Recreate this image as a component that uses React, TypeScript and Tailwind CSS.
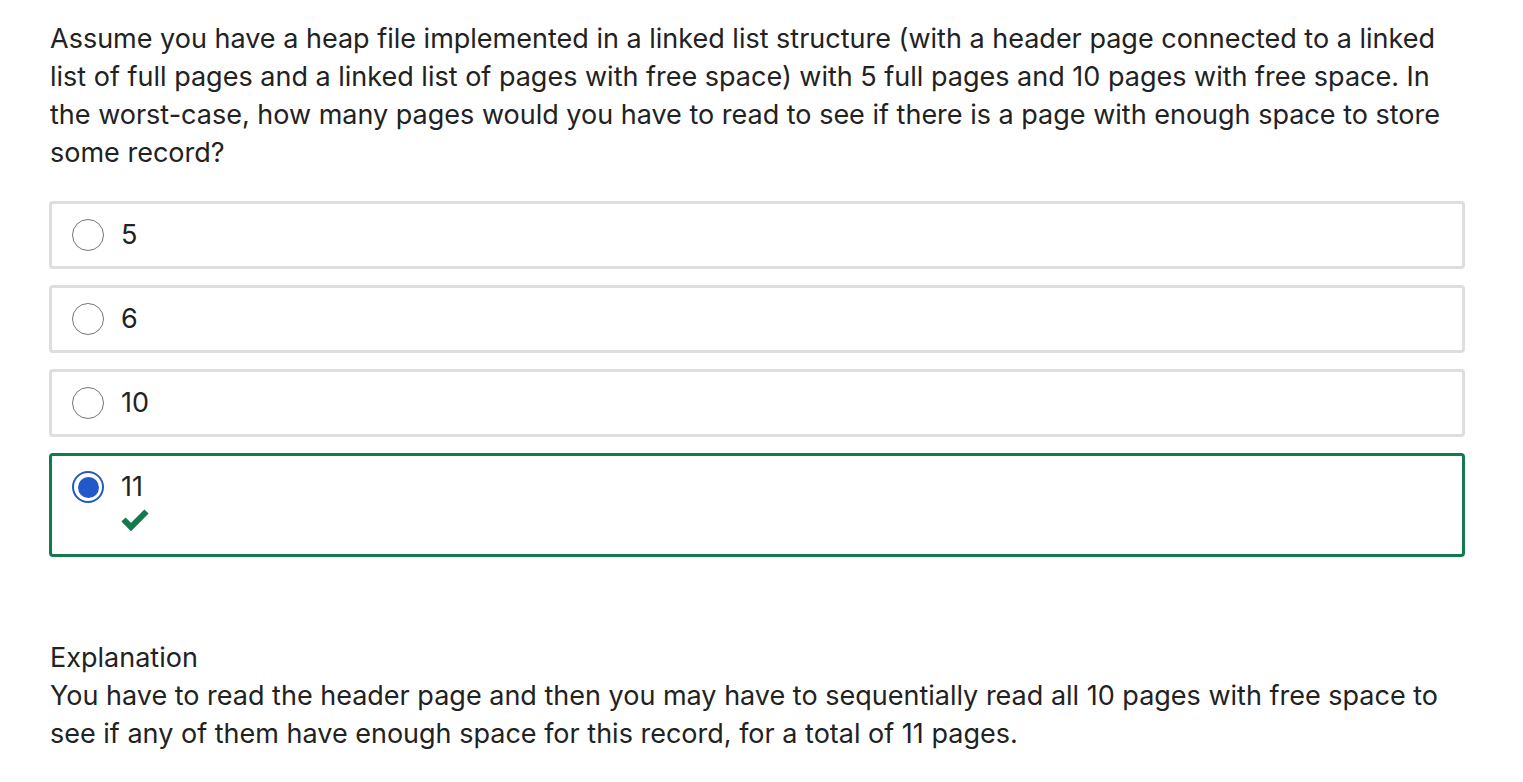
import { useState } from "react";

const options = [
  { id: "a", label: "5" },
  { id: "b", label: "6" },
  { id: "c", label: "10" },
  { id: "d", label: "11" },
];

function Radio({ checked }: { checked: boolean }) {
  if (checked) {
    return (
      <span className="flex h-8 w-8 shrink-0 items-center justify-center rounded-full border-2 border-[#2159c9] bg-white">
        <span className="h-[21px] w-[21px] rounded-full bg-[#2159c9]" />
      </span>
    );
  }
  return <span className="h-8 w-8 shrink-0 rounded-full border-[1.5px] border-[#767676] bg-white" />;
}

function CheckIcon() {
  return (
    <svg viewBox="0 0 28 24" className="h-[24px] w-[28px]" aria-hidden="true">
      <path d="M2.5 12.5 L10 20 L25.5 4.5" fill="none" stroke="#137a4d" strokeWidth="6" strokeLinecap="butt" strokeLinejoin="miter" />
    </svg>
  );
}

export default function App() {
  const [selected] = useState("d");
  const correct = "d";

  return (
    <div className="min-h-screen bg-white font-['Inter','Noto_Sans',sans-serif] text-[27px] leading-[38px] text-[#222]">
      <div className="ml-[49px] w-[1416px] pt-5">
        <p className="pl-px">
          Assume you have a heap file implemented in a linked list structure (with a header page connected to a linked
          list of full pages and a linked list of pages with free space) with 5 full pages and 10 pages with free space. In
          the worst-case, how many pages would you have to read to see if there is a page with enough space to store
          some record?
        </p>

        <div className="mt-[29px] flex flex-col gap-4">
          {options.map((option) => {
            const isSelected = option.id === selected;
            const isCorrect = isSelected && option.id === correct;
            return (
              <div
                key={option.id}
                className={
                  isCorrect
                    ? "rounded-[4px] border-[3px] border-[#137a4d] px-[20px] pt-[12px] pb-[23px]"
                    : "rounded-[4px] border-[3px] border-[#dedede] px-[20px] py-[12px]"
                }
              >
                <div className="flex items-start gap-[17px]">
                  <div className="flex h-[38px] items-center">
                    <Radio checked={isSelected} />
                  </div>
                  <div>
                    <div>{option.label}</div>
                    {isCorrect ? (
                      <div className="mt-[1px]">
                        <CheckIcon />
                      </div>
                    ) : null}
                  </div>
                </div>
              </div>
            );
          })}
        </div>

        <div className="mt-[82px] pl-px">
          <div>Explanation</div>
          <p>
            You have to read the header page and then you may have to sequentially read all 10 pages with free space to
            see if any of them have enough space for this record, for a total of 11 pages.
          </p>
        </div>
      </div>
    </div>
  );
}
